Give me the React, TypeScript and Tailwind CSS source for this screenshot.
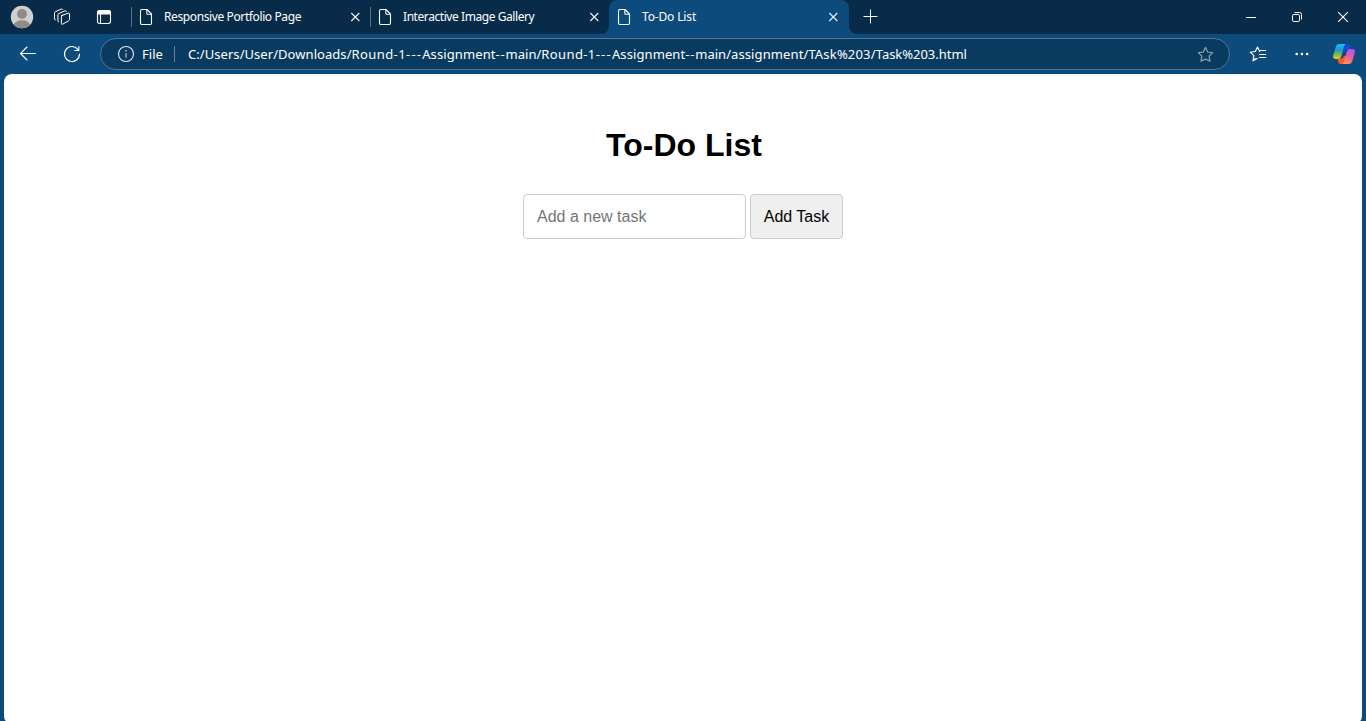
import React, { useState } from "react";

const UI_FONT = "font-['Noto_Sans','Open_Sans',sans-serif]";

function DocIcon() {
  return (
    <svg width="14" height="18" viewBox="0 0 14 18" fill="none" stroke="#fff" strokeWidth="1.1" strokeLinejoin="round" className="shrink-0">
      <path d="M2.5 1.5H8L12.5 6V15a1.5 1.5 0 0 1-1.5 1.5H2.5A1.5 1.5 0 0 1 1.5 15V3A1.5 1.5 0 0 1 2.5 1.5Z" />
      <path d="M7.8 1.7V5.2a1 1 0 0 0 1 1h3.5" />
    </svg>
  );
}

function SmallClose() {
  return (
    <svg width="10" height="10" viewBox="0 0 10 10" stroke="#f2f5f7" strokeWidth="1.1" className="shrink-0">
      <path d="M1.3 1l8 8M9.300 1L1.300 9" />
    </svg>
  );
}

function Avatar() {
  return (
    <svg width="24" height="24" viewBox="0 0 24 24" className="shrink-0">
      <defs>
        <clipPath id="avatar">
          <circle cx="12" cy="12" r="11.2" />
        </clipPath>
      </defs>
      <g clipPath="url(#avatar)">
        <rect width="24" height="24" fill="#d2d0ce" />
        <circle cx="12" cy="9" r="5" fill="#8f8b88" />
        <ellipse cx="12" cy="20" rx="8" ry="4.7" fill="#8f8b88" />
      </g>
    </svg>
  );
}

function WorkspacesIcon() {
  return (
    <svg width="18" height="18" viewBox="0 0 18 18" fill="none" stroke="#fff" strokeWidth="1" strokeLinejoin="round" strokeLinecap="round">
      <path d="M8.500 7.600 15.400 5q1.100-.3 1.100.8v5.600q0 .8-.7 1.200l-6.200 3.600q-1.200.5-1.200-.7V8.700q0-.8.7-1.100Z" />
      <path d="M5.600 13.900q-.7-.2-.7-1V6.900q0-.8.7-1.200L12 2.800q1-.4 1.400.5" />
      <path d="M2.300 11.900q-.8-.2-.8-1V5q0-.8.7-1.200L8.400 1q1-.3 1.400.5" />
    </svg>
  );
}

function TabActionsIcon() {
  return (
    <svg width="16" height="16" viewBox="0 0 16 16" fill="none" stroke="#fff" strokeWidth="1.100">
      <rect x="1.500" y="1.500" width="13" height="13" rx="2.200" />
      <path d="M1.500 5V3.500a2 2 0 0 1 2-2h9a2 2 0 0 1 2 2V5Z" fill="#fff" />
      <path d="M4.500 5v9.500" />
    </svg>
  );
}

const STAR = "M8 .9 10.2 5.500 15.300 6.200 11.600 9.700 12.500 14.800 8 12.400 3.500 14.800 4.400 9.700.7 6.200 5.800 5.500Z";

function CopilotIcon() {
  return (
    <svg width="24" height="22" viewBox="0 0 24 22">
      <defs>
        <linearGradient id="cl" x1="0" y1="0" x2="0" y2="1">
          <stop offset="0" stopColor="#18bdf6" />
          <stop offset=".4" stopColor="#2196c9" />
          <stop offset=".7" stopColor="#77bd55" />
          <stop offset="1" stopColor="#f4c900" />
        </linearGradient>
        <linearGradient id="cr" x1=".7" y1="0" x2=".3" y2="1">
          <stop offset="0" stopColor="#a957ee" />
          <stop offset=".5" stopColor="#ed5aa0" />
          <stop offset="1" stopColor="#ff944f" />
        </linearGradient>
      </defs>
      <path d="M9 1h6.500c1.600 0 2.200 1 2.600 2.400L19 6.500h-3c-2 0-2.700 1-3.300 3L10 9Z" fill="#1749d6" />
      <path d="M15 21H9c-1.700 0-2.300-1-2.800-2.600L5.500 15.500H9c1.800 0 2.500-1 3-3L15 14Z" fill="#fb5631" />
      <path d="M7 1h7.200c-1.400.4-1.900 1.600-2.400 3.200L9.300 13c-.6 2-1.400 3-3.300 3H3.500C1.400 16 .7 14.200 1.200 12.300L3.700 4C4.300 2 5.200 1 7 1Z" fill="url(#cl)" />
      <path d="M17 21H9.800c1.400-.4 1.900-1.600 2.400-3.200L14.700 9c.6-2 1.400-3 3.300-3h2.500c2.100 0 2.800 1.800 2.300 3.700L20.300 18c-.6 2-1.500 3-3.300 3Z" fill="url(#cr)" />
    </svg>
  );
}

function Tab({ title, textClass }: { title: string; textClass: string }) {
  return (
    <div className="flex h-[34px] w-[239px] items-center">
      <div className="h-5 w-px bg-[#59728a]" />
      <div className="flex flex-1 items-center pr-[10px] pl-[7px]">
        <DocIcon />
        <span className={`ml-[11px] flex-1 text-[12px] whitespace-nowrap ${textClass}`}>{title}</span>
        <SmallClose />
      </div>
    </div>
  );
}

function TabStrip() {
  return (
    <div className="flex h-[34px] shrink-0 items-center bg-[#082b49] text-white">
      <div className="flex w-[131px] items-center pl-[10px]">
        <Avatar />
        <div className="ml-[19px]"><WorkspacesIcon /></div>
        <div className="ml-[25px]"><TabActionsIcon /></div>
      </div>
      <Tab title="Responsive Portfolio Page" textClass="tracking-[-0.39px]" />
      <Tab title="Interactive Image Gallery" textClass="tracking-[-0.43px]" />
      <div className="relative flex h-[34px] w-[240px] items-center rounded-t-[8px] bg-[#0c4b7b] pr-[11px] pl-[8px]">
        <svg width="8" height="8" className="absolute bottom-0 -left-2"><path d="M8 0A8 8 0 0 1 0 8H8Z" fill="#0c4b7b" /></svg>
        <svg width="8" height="8" className="absolute -right-2 bottom-0"><path d="M0 0A8 8 0 0 0 8 8H0Z" fill="#0c4b7b" /></svg>
        <DocIcon />
        <span className="ml-[11px] flex-1 text-[12px] tracking-[-0.150px] whitespace-nowrap">To-Do List</span>
        <SmallClose />
      </div>
      <svg width="15" height="16" viewBox="0 0 15 16" stroke="#fff" className="ml-[14px]"><path d="M7.500 .5v14M.5 7.500h14" /></svg>
      <div className="ml-auto flex">
        <div className="flex w-[46px] items-center justify-center">
          <svg width="10" height="10" stroke="#fff"><path d="M0 5.500h10" /></svg>
        </div>
        <div className="flex w-[46px] items-center justify-center">
          <svg width="10" height="10" viewBox="0 0 10 10" fill="none" stroke="#fff">
            <rect x=".5" y="2.500" width="7" height="7" rx="1.300" />
            <path d="M2.500.5H7.500a2 2 0 0 1 2 2V7.500" />
          </svg>
        </div>
        <div className="flex w-[46px] items-center justify-center">
          <svg width="10" height="10" viewBox="0 0 10 10" stroke="#fff" strokeWidth="1.100"><path d="M0 0l10 10M10 0L0 10" /></svg>
        </div>
      </div>
    </div>
  );
}

function Url() {
  return (
    <span className="ml-[13px] flex-1 translate-y-px text-[13px] whitespace-nowrap">
      <span className="tracking-[0.055px]">C:/Users/User/Downloads/</span>
      <span className="tracking-[0.4px]">Round-1</span>
      <span className="tracking-[1.220px]">---</span>
      <span className="tracking-[0.1px]">Assignment</span>
      <span className="tracking-[0.820px]">--</span>
      <span>main/</span>
      <span className="tracking-[0.4px]">Round-1</span>
      <span className="tracking-[1.220px]">---</span>
      <span className="tracking-[0.1px]">Assignment</span>
      <span className="tracking-[0.820px]">--</span>
      <span>main/</span>
      <span className="tracking-[0.110px]">assignment/</span>
      <span className="tracking-[0.180px]">TAsk%203/</span>
      <span className="tracking-[-0.030px]">Task%203.html</span>
    </span>
  );
}

function Toolbar() {
  return (
    <div className="flex h-10 shrink-0 items-center bg-[#0c4b7b] text-white">
      <div className="flex w-[100px] items-center pl-[19px]">
        <svg width="18" height="18" viewBox="0 0 18 18" fill="none" stroke="#fff" strokeWidth="1.100" strokeLinecap="round" strokeLinejoin="round"><path d="M16.500 8.500H1.500M8 2 1.500 8.500 8 15" /></svg>
        <svg width="18" height="18" viewBox="0 0 18 18" fill="none" stroke="#fff" strokeWidth="1.100" strokeLinecap="round" strokeLinejoin="round" className="ml-[26px]">
          <path d="M16.500 9A7.500 7.500 0 1 1 14.800 4.300L15.800 5.500M15.800 1.500v4h-4" />
        </svg>
      </div>
      <div className="flex h-8 w-[1130px] items-center rounded-full border border-[#52758f] bg-[#093b60] pr-[15.500px] pl-[16px]">
        <svg width="18" height="18" viewBox="0 0 18 18" fill="none" stroke="#e6ebef" strokeWidth="1.100"><circle cx="9" cy="9" r="7.500" /><path d="M9 8v4.800" stroke="#b9c5ce" /><circle cx="9" cy="5.700" r=".3" stroke="#b9c5ce" /></svg>
        <span className="ml-[7px] w-[32px] translate-y-px text-[13px] tracking-[0.050px] whitespace-nowrap">File</span>
        <div className="h-4 w-px bg-[#668299]" />
        <Url />
        <svg width="17" height="17" viewBox="-.5 -.5 17 17" fill="none" stroke="#9ba7b1" strokeWidth="1.100" strokeLinejoin="round"><path d={STAR} /></svg>
      </div>
      <svg width="18" height="18" viewBox="-.5 -1 18 18" fill="none" stroke="#fff" strokeWidth="1.100" strokeLinejoin="round" strokeLinecap="round" className="ml-[19px]">
        <path d="M5.700 12.700 3.500 14.800 4.400 9.700.7 6.200 5.800 5.500 8 .9 10.200 5.500M3.500 14.800 7.800 12.500M11 4.500H16.200M10 8.500h6.200M10 11.500h6.200" />
      </svg>
      <svg width="14" height="4" fill="#fff" className="ml-[28px]"><circle cx="1.700" cy="2" r="1.300" /><circle cx="6.900" cy="2" r="1.300" /><circle cx="12.100" cy="2" r="1.300" /></svg>
      <div className="ml-[23px]"><CopilotIcon /></div>
    </div>
  );
}

export default function App() {
  const [task, setTask] = useState("");
  return (
    <div className={`flex h-[721px] w-[1366px] flex-col overflow-hidden bg-[#0c4b7b] ${UI_FONT}`}>
      <TabStrip />
      <Toolbar />
      <main className="mx-1 flex h-[650px] shrink-0 flex-col items-center rounded-[8px] bg-white pt-[53px] font-['Liberation_Sans',Arial,sans-serif] text-black">
        <h1 className="pl-[2px] text-[32px] leading-[37px] font-bold">To-Do List</h1>
        <div className="mt-[30px] flex gap-1">
          <input
            value={task}
            onChange={(e) => setTask(e.target.value)}
            placeholder="Add a new task"
            className="h-[45px] w-[223px] rounded-[4px] border border-[#ccc] px-[13px] text-[16px] placeholder:text-[#757575]"
          />
          <button className="h-[45px] w-[93px] rounded-[4px] border border-[#ccc] bg-[#efefef] text-[16px] whitespace-nowrap">Add Task</button>
        </div>
      </main>
    </div>
  );
}
